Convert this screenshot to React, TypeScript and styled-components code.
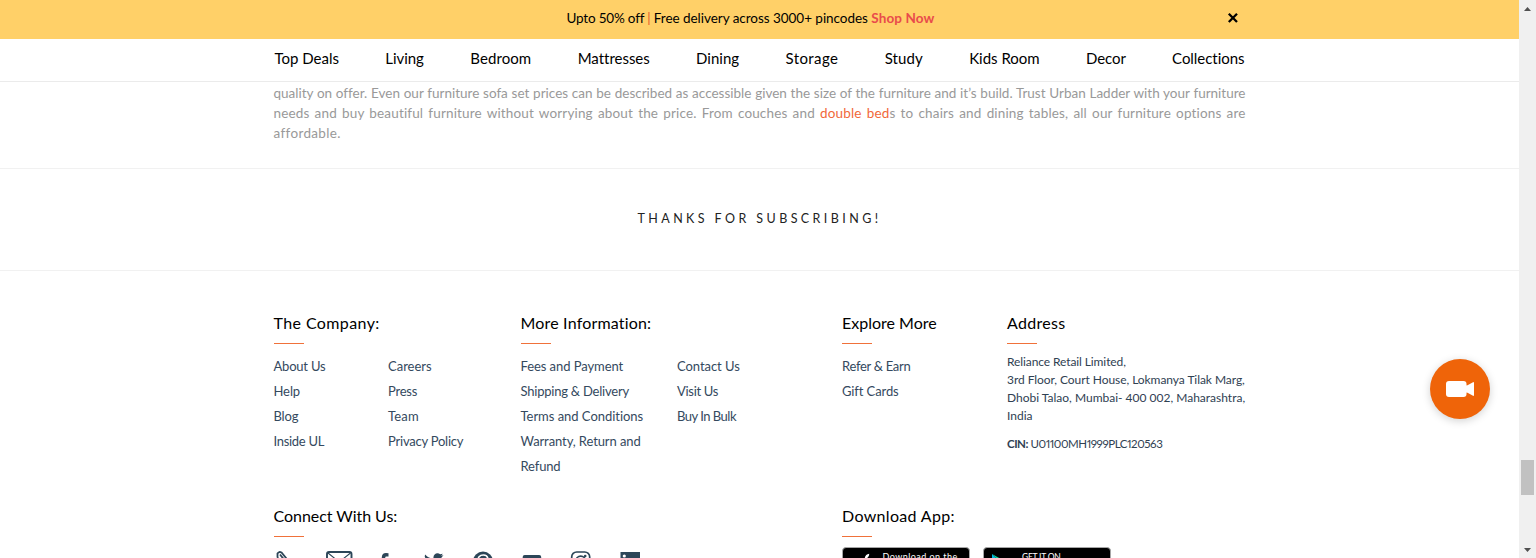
import React from 'react';
import styled, { createGlobalStyle } from 'styled-components';

const GlobalStyle = createGlobalStyle`
  * { box-sizing: border-box; }
  html, body { margin: 0; padding: 0; background: #fff; overflow: hidden; }
  body {
    font-family: Lato, "Open Sans", sans-serif;
    font-variant-ligatures: none;
    color: #000;
  }
  a { color: inherit; text-decoration: none; }
`;

const Screen = styled.div`
  display: flex;
  width: 1536px;
  height: 558px;
  overflow: hidden;
`;
const Page = styled.div`
  position: relative;
  width: 1519px;
  height: 558px;
  overflow: hidden;
`;
const Container = styled.div`
  width: 972px;
  margin: 0 auto;
`;

/* Letter spacing varies from one label to the next. */
const Label = styled.span<{ $ls?: number }>`
  letter-spacing: ${(p) => p.$ls ?? 0}px;
  white-space: nowrap;
`;

const Banner = styled.div`
  height: 39px;
  background: #ffd068;
`;
const BannerInner = styled(Container)`
  height: 36px;
  display: grid;
  grid-template-columns: 30px 1fr 30px;
  align-items: center;
  font-size: 13.5px;
`;
const BannerText = styled.p`
  grid-column: 2;
  margin: 0;
  padding-right: 18px;
  text-align: center;
  white-space: nowrap;
`;
const Divider = styled.span`
  color: #e4572e;
`;
const ShopLink = styled.a`
  color: #e94b4b !important;
  font-weight: 700;
`;
const CloseButton = styled.button`
  border: 0;
  padding: 0;
  margin-left: 11px;
  width: 12px;
  height: 12px;
  background: none;
  display: flex;
`;

const Nav = styled.nav`
  height: 43px;
  border-bottom: 1px solid #ebebeb;
`;
const NavInner = styled(Container)`
  display: flex;
  justify-content: space-between;
  padding: 0 1px;
  line-height: 38px;
  font-size: 15px;
`;

const Intro = styled.section`
  padding: 1px 0 24px;
  border-bottom: 1px solid #f1f1f1;
  height: 87px;
`;
const IntroText = styled.p`
  margin: 0;
  font-size: 13.5px;
  line-height: 20px;
  color: #999;
`;
const Line = styled.span<{ $ls?: number; $last?: boolean }>`
  display: block;
  white-space: nowrap;
  text-align-last: ${(p) => (p.$last ? 'left' : 'justify')};
  letter-spacing: ${(p) => p.$ls ?? 0}px;
`;
const Accent = styled.a`
  color: #f1683a !important;
`;

const Subscribed = styled.section`
  height: 102px;
  border-bottom: 1px solid #f1f1f1;
  text-align: center;
  line-height: 100px;
  font-size: 12.5px;
  color: #222;
`;

const FooterRow = styled(Container)<{ $height: number; $top: number }>`
  display: grid;
  grid-template-columns: 247px 321.5px 165px 1fr;
  height: ${(p) => p.$height}px;
  padding-top: ${(p) => p.$top}px;
`;
const Group = styled.div<{ $span?: number }>`
  grid-column: span ${(p) => p.$span ?? 1};
  min-width: 0;
`;
const Heading = styled.h4`
  margin: 0;
  font-size: 16px;
  font-weight: 400;
  line-height: 20px;
  &::after {
    content: '';
    display: block;
    width: 30px;
    height: 1px;
    margin-top: 10px;
    background: #f0713a;
  }
`;
const LinkColumns = styled.div<{ $first: number }>`
  display: grid;
  grid-template-columns: ${(p) => p.$first}px 1fr;
  padding-top: 10px;
  font-size: 13px;
  line-height: 25px;
  color: #34495e;
`;
const LinkList = styled.ul`
  margin: 0;
  padding: 0;
  list-style: none;
`;
const Address = styled.address`
  font-style: normal;
  padding-top: 9px;
  font-size: 12px;
  line-height: 18px;
  color: #2f4152;
`;
const AddressLine = styled.div`
  height: 18px;
`;
const Cin = styled.div`
  margin-top: 10px;
  font-size: 11.5px;
  font-variant-numeric: proportional-nums;
`;

const Socials = styled.div`
  display: flex;
  padding-top: 12px;
  color: #2c4658;
`;
const SocialIcon = styled.svg`
  width: 30px;
  height: 28px;
  margin-right: 19.1px;
  flex: none;
`;

const Badges = styled.div`
  display: flex;
  gap: 13px;
  padding-top: 10px;
`;
const StoreBadge = styled.a`
  display: flex;
  width: 128px;
  height: 40px;
  border-radius: 4px;
  border: 1px solid #a6a6a6;
  background: #000;
  color: #fff !important;
`;
const StoreLogo = styled.svg`
  width: 38px;
  height: 38px;
  flex: none;
`;
const StoreText = styled.span<{ $size: number; $indent: number }>`
  padding-left: ${(p) => p.$indent}px;
  padding-top: 3px;
  font-size: ${(p) => p.$size}px;
  line-height: 12px;
`;

const VideoButton = styled.button`
  position: absolute;
  left: 1430px;
  top: 359px;
  width: 60px;
  height: 60px;
  padding: 0;
  border: 0;
  border-radius: 50%;
  background: #ef6409;
  box-shadow: 0 2px 8px rgba(0, 0, 0, 0.18);
`;

const Scrollbar = styled.div`
  width: 17px;
  height: 558px;
  background: #f0f0f0;
  display: flex;
  flex-direction: column;
  align-items: center;
`;
const ScrollArrow = styled.svg`
  width: 17px;
  height: 17px;
  flex: none;
`;
const Track = styled.div`
  flex: 1;
  width: 13px;
  padding-top: 443px;
`;
const Thumb = styled.div`
  height: 35px;
  background: #c1c1c1;
`;

type Item = [string, number];

const NAV: Item[] = [
  ['Top Deals', 0], ['Living', -0.05], ['Bedroom', 0.1], ['Mattresses', -0.02], ['Dining', 0],
  ['Storage', 0.4], ['Study', 0.1], ['Kids Room', 0], ['Decor', -0.1], ['Collections', -0.05],
];
const COMPANY: Item[][] = [
  [['About Us', -0.2], ['Help', -0.1], ['Blog', -0.15], ['Inside UL', -0.3]],
  [['Careers', 0], ['Press', -0.25], ['Team', 0.2], ['Privacy Policy', -0.22]],
];
const INFO: Item[][] = [
  [['Fees and Payment', -0.07], ['Shipping & Delivery', -0.22], ['Terms and Conditions', -0.03], ['Warranty, Return and', -0.1], ['Refund', -0.15]],
  [['Contact Us', -0.05], ['Visit Us', -0.3], ['Buy In Bulk', -0.5]],
];
const EXPLORE: Item[][] = [[['Refer & Earn', -0.3], ['Gift Cards', -0.1]]];
const ADDRESS: Item[] = [
  ['Reliance Retail Limited,', -0.1],
  ['3rd Floor, Court House, Lokmanya Tilak Marg,', -0.06],
  ['Dhobi Talao, Mumbai- 400 002, Maharashtra,', 0],
  ['India', 0],
];

const Links = ({ columns, first }: { columns: Item[][]; first: number }) => (
  <LinkColumns $first={first}>
    {columns.map((col, i) => (
      <LinkList key={i}>
        {col.map(([text, ls]) => (
          <li key={text}><a href="#"><Label $ls={ls}>{text}</Label></a></li>
        ))}
      </LinkList>
    ))}
  </LinkColumns>
);

export default function App() {
  return (
    <Screen>
      <GlobalStyle />
      <Page>
        <Banner>
          <BannerInner>
            <BannerText>
              <Label $ls={-0.2}>Upto 50% off <Divider>|</Divider></Label>
              <Label $ls={-0.04}> Free delivery across 3000+ pincodes </Label>
              <ShopLink href="#"><Label $ls={0.1}>Shop Now</Label></ShopLink>
            </BannerText>
            <CloseButton aria-label="Close">
              <svg width="12" height="12" viewBox="0 0 12 12"><path d="M1.800 1.800 10 10M10 1.800 1.800 10" stroke="#000" strokeWidth="2.300" /></svg>
            </CloseButton>
          </BannerInner>
        </Banner>
        <Nav>
          <NavInner>
            {NAV.map(([text, ls]) => <a href="#" key={text}><Label $ls={ls}>{text}</Label></a>)}
          </NavInner>
        </Nav>
        <Intro>
          <Container>
            <IntroText>
              <Line>quality on offer. Even our furniture sofa set prices can be described as accessible given the size of the furniture and it’s build. Trust Urban Ladder with your furniture</Line>
              <Line $ls={0.15}>needs and buy beautiful furniture without worrying about the price. From couches and <Accent href="#">double bed</Accent>s to chairs and dining tables, all our furniture options are</Line>
              <Line $last $ls={0.35}>affordable.</Line>
            </IntroText>
          </Container>
        </Intro>
        <Subscribed><Label $ls={3.42}>THANKS FOR SUBSCRIBING!</Label></Subscribed>

        <FooterRow $height={235} $top={42}>
          <Group>
            <Heading><Label $ls={0.4}>The Company:</Label></Heading>
            <Links columns={COMPANY} first={114.5} />
          </Group>
          <Group>
            <Heading><Label $ls={0.18}>More Information:</Label></Heading>
            <Links columns={INFO} first={156.5} />
          </Group>
          <Group>
            <Heading><Label>Explore More</Label></Heading>
            <Links columns={EXPLORE} first={100} />
          </Group>
          <Group>
            <Heading><Label $ls={0.3}>Address</Label></Heading>
            <Address>
              {ADDRESS.map(([text, ls]) => <AddressLine key={text}><Label $ls={ls}>{text}</Label></AddressLine>)}
              <Cin><Label $ls={-0.45}><b>CIN:</b> U01100MH1999PLC120563</Label></Cin>
            </Address>
          </Group>
        </FooterRow>

        <FooterRow $height={80} $top={0}>
          <Group $span={2}>
            <Heading><Label $ls={-0.05}>Connect With Us:</Label></Heading>
            <Socials>
              <SocialIcon viewBox="0 0 30 28"><path d="M3.500 8V4.500Q5 2 7.500 3.500L12.500 9.500M6 5.500l4 5M3.500 8Q6 18 17 21" fill="none" stroke="currentColor" strokeWidth="1.800" /></SocialIcon>
              <SocialIcon viewBox="0 0 30 28"><rect x="4" y="3" width="24.500" height="18" rx="2" fill="none" stroke="currentColor" strokeWidth="1.900" /><path d="m5 4 11.200 9L27.500 4" fill="none" stroke="currentColor" strokeWidth="1.100" /></SocialIcon>
              <SocialIcon viewBox="0 0 30 28"><path d="M16.500 4.200v3.300h-2c-1.100 0-1.300.6-1.300 1.500v2.300h3.200l-.4 3.500h-2.800v8.700H9.800v-8.700H7.500v-3.500h2.300V8.300C9.800 5.500 11.500 4 14 4z" fill="currentColor" /></SocialIcon>
              <SocialIcon viewBox="0 0 30 28"><path d="M4.300 5.500c2.100 2.500 4.900 3.900 8.200 4.100-.8-3.900 3.400-6.900 6.700-4.300l2.600-.6-1.600 2.100 2.300-.5-2 2.100c.3 8.200-9.300 14.500-17.400 9.500 2.200.3 4.100-.4 5.700-1.600-1.800-.1-3.100-1.200-3.700-2.700h1.700c-1.900-.7-3.100-2-3.100-4l1.800.5c-1.700-1.300-2.300-2.800-1.200-4.600z" fill="currentColor" /></SocialIcon>
              <SocialIcon viewBox="0 0 30 28"><circle cx="13" cy="12.500" r="10" fill="currentColor" /><path d="M9.200 12.500C6.800 8.500 10 6 13.400 6c6.300 0 5.500 9.300 1.200 9.300-1.400 0-1.900-1.100-1.900-1.100L11.300 20M13.200 9.500l-1.600 7" fill="none" stroke="#fff" strokeWidth="1.600" /></SocialIcon>
              <SocialIcon viewBox="0 0 30 28"><rect x="3.700" y="6" width="18.500" height="14" rx="2" fill="currentColor" /><path d="m11 10 6 3.500-6 3.500z" fill="#fff" /></SocialIcon>
              <SocialIcon viewBox="0 0 30 28"><rect x="3.700" y="3" width="18" height="18" rx="5" fill="none" stroke="currentColor" strokeWidth="1.700" /><circle cx="12.700" cy="12" r="4.800" fill="none" stroke="currentColor" strokeWidth="1.700" /><circle cx="17.200" cy="7" r="1.300" fill="currentColor" /></SocialIcon>
              <SocialIcon viewBox="0 0 30 28"><path d="M3.500 3h19.500v19H3.500z" fill="currentColor" /><circle cx="7.300" cy="7" r="1.600" fill="#fff" /><path d="M6 10h2.800v9H6zm4.800 0h2.700v1.300c2-2.400 6-1.700 6 2.200V19h-2.800v-5c0-2.300-3.100-2.200-3.100 0v5h-2.800z" fill="#fff" /></SocialIcon>
            </Socials>
          </Group>
          <Group $span={2}>
            <Heading><Label $ls={0.33}>Download App:</Label></Heading>
            <Badges>
              <StoreBadge href="#">
                <StoreLogo viewBox="0 0 38 38"><path d="M26.200 5.800c.1 2.600-2 4.900-4.400 5-.3-2.500 1.900-4.800 4.400-5zM28 15c-3.100 2-2.600 6.600 1 8-1.200 3-3 6-5 6-1.500 0-2.200-.9-4-.9s-2.600.9-4 .9c-3 0-8-10-3.500-15 3-3.300 6.300-1 7.600-1s5-2.300 7.900 2z" fill="#fff" /></StoreLogo>
                <StoreText $size={9} $indent={1.5}><Label $ls={0.45}>Download on the</Label></StoreText>
              </StoreBadge>
              <StoreBadge href="#">
                <StoreLogo viewBox="0 0 38 38"><path d="M8 6v26l13-13z" fill="#00b8e8" /><path d="m8 6 17 9.500-4 3.500z" fill="#12d69a" /><path d="m25 15.500 6 3.500-6 3.500-4-3.500z" fill="#ffce00" /><path d="m8 32 17-9.500-4-3.500z" fill="#f43249" /></StoreLogo>
                <StoreText $size={8.5} $indent={0}><Label $ls={-0.25}>GET IT ON</Label></StoreText>
              </StoreBadge>
            </Badges>
          </Group>
        </FooterRow>

        <VideoButton aria-label="Video call">
          <svg width="60" height="60" viewBox="0 0 60 60"><rect x="16" y="22" width="20.500" height="16" rx="3" fill="#fff" /><path d="M36 26.500 37.500 26.200 43 23.200Q44 22.800 44 24v12q0 1.200-1 .8L37.500 33.800 36 33.500z" fill="#fff" /></svg>
        </VideoButton>
      </Page>
      <Scrollbar>
        <ScrollArrow viewBox="0 0 17 17"><path d="M5 11 8.500 7 12 11z" fill="#505050" /></ScrollArrow>
        <Track><Thumb /></Track>
        <ScrollArrow viewBox="0 0 17 17"><path d="m5 7 3.500 4L12 7z" fill="#505050" /></ScrollArrow>
      </Scrollbar>
    </Screen>
  );
}
